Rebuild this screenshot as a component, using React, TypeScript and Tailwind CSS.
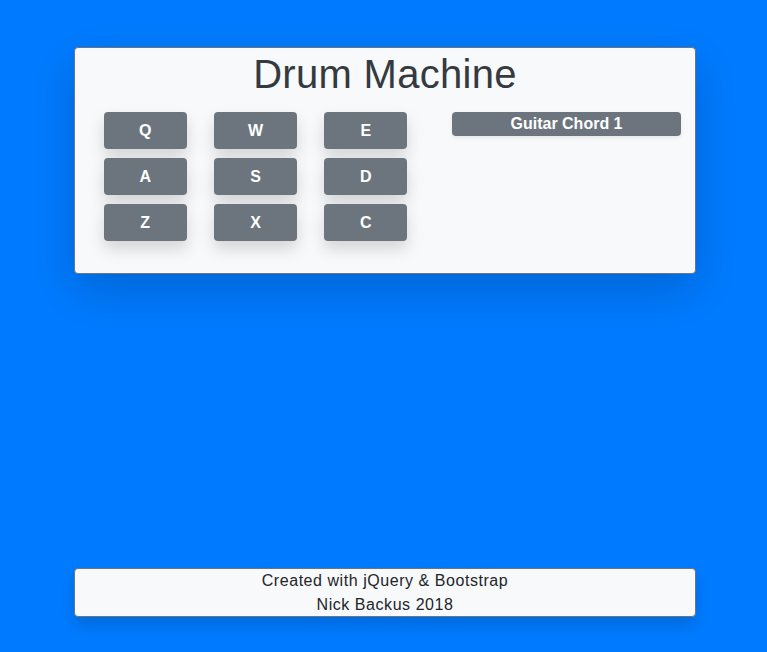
import React from "react";

const pads = ["Q", "W", "E", "A", "S", "D", "Z", "X", "C"];

export default function App() {
  return (
    <div
      className="w-full h-[652px] bg-[#007bff] flex flex-col overflow-hidden"
      style={{ fontFamily: '"Liberation Sans", Arial, sans-serif' }}
    >
      <div className="ml-[74px] mt-[47px] w-[622px] h-[227px] bg-[#f8f9fa] border border-[#6c757d] rounded-[4px] shadow-[0_16px_48px_rgba(0,0,0,0.18)] flex flex-col">
        <h1 className="mt-[2px] text-[40px] leading-[48px] tracking-[0.3px] text-[#343a40] text-center font-normal">
          Drum Machine
        </h1>
        <div className="mt-[14px] flex pl-[15px]">
          <div className="w-[331px] grid grid-cols-3 gap-y-[9px]">
            {pads.map((p) => (
              <div key={p} className="flex justify-center">
                <button className="w-[83px] h-[37px] bg-[#6c757d] rounded-[4px] text-white font-bold text-[16px] shadow-[0_8px_16px_rgba(0,0,0,0.15)] flex items-center justify-center">
                  {p}
                </button>
              </div>
            ))}
          </div>
          <div className="ml-[31px] w-[229px] h-[24px] bg-[#6c757d] rounded-[4px] text-white font-bold text-[16px] leading-[24px] text-center shadow-[0_2px_4px_rgba(0,0,0,0.075)]">
            Guitar Chord 1
          </div>
        </div>
      </div>
      <div className="ml-[74px] mt-[294px] w-[622px] h-[49px] bg-[#f8f9fa] border border-[#6c757d] rounded-[4px] shadow-[0_8px_16px_rgba(0,0,0,0.15)] text-[16px] leading-[23.5px] tracking-[0.55px] text-[#212529] text-center flex flex-col justify-center">
        <div>Created with jQuery &amp; Bootstrap</div>
        <div>Nick Backus 2018</div>
      </div>
    </div>
  );
}
